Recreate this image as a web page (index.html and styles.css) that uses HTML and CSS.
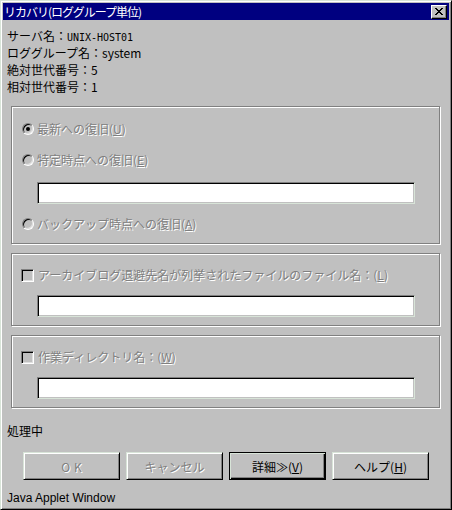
FILE: index.html
```html
<!DOCTYPE html>
<html lang="ja">
<head>
<meta charset="utf-8">
<title>リカバリ(ロググループ単位)</title>
<link rel="stylesheet" href="styles.css">
</head>
<body>
<div class="window">
  <div class="titlebar">
    <span class="title-text">リカバリ(ロググループ単位)</span>
    <span class="close-btn">
      <svg width="8" height="7" viewBox="0 0 8 7"><path d="M0 0h2v1h1v1h2V1h1V0h2v1H7v1H6v1H5v1h1v1h1v1h1v1H6V6H5V5H3v1H2v1H0V6h1V5h1V4h1V3H2V2H1V1H0z" fill="#000"/></svg>
    </span>
  </div>

  <div class="info">
    <div class="line">サーバ名：<span class="mono">UNIX-HOST01</span></div>
    <div class="line">ロググループ名：system</div>
    <div class="line">絶対世代番号：5</div>
    <div class="line">相対世代番号：1</div>
  </div>

  <div class="group group-recover">
    <div class="row"><span class="radio checked"></span><span class="label disabled">最新への復旧(<u>U</u>)</span></div>
    <div class="row row-gap"><span class="radio"></span><span class="label disabled">特定時点への復旧(<u>E</u>)</span></div>
    <div class="field field-a"></div>
    <div class="row row-gap2"><span class="radio"></span><span class="label disabled">バックアップ時点への復旧(<u>A</u>)</span></div>
  </div>

  <div class="group group-small">
    <div class="row"><span class="check"></span><span class="label disabled">アーカイブログ退避先名が列挙されたファイルのファイル名：(<u>L</u>)</span></div>
    <div class="field"></div>
  </div>

  <div class="group group-small">
    <div class="row"><span class="check"></span><span class="label disabled">作業ディレクトリ名：(<u>W</u>)</span></div>
    <div class="field"></div>
  </div>

  <div class="status">処理中</div>

  <div class="buttons">
    <div class="btn"><span class="disabled ok">OK</span></div>
    <div class="btn"><span class="disabled">キャンセル</span></div>
    <div class="btn btn-default"><span>詳細≫(<u>V</u>)</span></div>
    <div class="btn"><span>ヘルプ(<u>H</u>)</span></div>
  </div>

  <div class="footer">Java Applet Window</div>
</div>
</body>
</html>
```

FILE: styles.css
```css
* { box-sizing: border-box; }
html, body { margin: 0; padding: 0; background: #c0c0c0; }
body {
  font-family: "Noto Sans CJK JP", "Liberation Sans", sans-serif;
  font-size: 12px;
  color: #000;
}
.window {
  width: 452px;
  height: 510px;
  background: #c0c0c0;
  border: 1px solid;
  border-color: #d8e4d8 #000 #000 #d8e4d8;
  box-shadow: inset 1px 1px 0 #fff, inset -1px -1px 0 #808080;
  padding: 2px;
  overflow: hidden;
}
.titlebar {
  height: 17px;
  background: #000080;
  display: flex;
  align-items: center;
  justify-content: space-between;
  padding: 0 2px 0 1px;
}
.title-text {
  color: #fff;
  font-size: 12px;
  line-height: 17px;
  letter-spacing: -1px;
}
.close-btn {
  width: 16px;
  height: 14px;
  background: #c0c0c0;
  border: 1px solid;
  border-color: #fff #000 #000 #fff;
  box-shadow: inset -1px -1px 0 #808080;
  display: flex;
  align-items: center;
  justify-content: center;
  padding-bottom: 1px;
}
.close-btn svg { display: block; }
.info { padding: 7px 0 0 4px; }
.line { line-height: 17px; height: 17px; white-space: nowrap; }
.mono {
  font-family: "DejaVu Sans Mono", "Liberation Mono", monospace;
  font-size: 10px;
}

.group {
  margin-left: 8px;
  width: 429px;
  border: 1px solid #808080;
  box-shadow: inset 1px 1px 0 #fff, 1px 1px 0 #fff;
  padding-left: 10px;
}
.group-recover {
  margin-top: 11px;
  padding-top: 12px;
  padding-bottom: 9px;
}
.group-small {
  margin-top: 9px;
  padding-top: 11px;
  padding-bottom: 8px;
}
.row {
  height: 20px;
  display: flex;
  align-items: center;
  white-space: nowrap;
}
.row-gap { margin-top: 11px; }
.row-gap2 { margin-top: 10px; }
.label { line-height: 20px; }
.disabled {
  color: #808080;
  text-shadow: 1px 1px 0 #fff;
}
u { text-decoration: underline; text-underline-offset: 1px; }

.radio {
  width: 12px;
  height: 12px;
  border-radius: 50%;
  border: 1px solid;
  border-color: #808080 #fff #fff #808080;
  box-shadow: inset 1px 1px 0 #000, inset -1px -1px 0 #dfdfdf;
  background: #c0c0c0;
  margin-right: 3px;
  position: relative;
  flex: none;
}
.radio.checked::after {
  content: "";
  position: absolute;
  left: 3px;
  top: 3px;
  width: 4px;
  height: 4px;
  border-radius: 50%;
  background: #000;
}
.check {
  width: 13px;
  height: 13px;
  border: 1px solid;
  border-color: #808080 #fff #fff #808080;
  box-shadow: inset 1px 1px 0 #000, inset -1px -1px 0 #dfdfdf;
  background: #c0c0c0;
  margin-left: -1px;
  margin-right: 4px;
  flex: none;
}

.field {
  margin-left: 15px;
  margin-top: 10px;
  width: 378px;
  height: 22px;
  background: #fff;
  border: 1px solid;
  border-color: #808080 #d8e4d8 #d8e4d8 #808080;
  box-shadow: inset 1px 1px 0 #000, inset -1px -1px 0 #c0c0c0;
}
.field-a { margin-top: 12px; }

.status {
  margin-top: 14px;
  padding-left: 4px;
  line-height: 17px;
  height: 17px;
}
.buttons {
  margin-top: 13px;
  padding-left: 20px;
  display: flex;
  gap: 6px;
}
.btn {
  width: 97px;
  height: 28px;
  border: 1px solid;
  border-color: #d8e4d8 #000 #000 #d8e4d8;
  box-shadow: inset 1px 1px 0 #fff, inset -1px -1px 0 #808080;
  display: flex;
  align-items: center;
  justify-content: center;
  white-space: nowrap;
}
.btn-default {
  border: 1px solid #000;
  box-shadow: inset 1px 1px 0 #d8e4d8, inset -1px -1px 0 #000, inset -2px -2px 0 #808080;
}
.ok { letter-spacing: 4px; margin-right: -4px; }
.footer {
  margin-top: 10px;
  padding-left: 4px;
  line-height: 17px;
  font-family: "Liberation Sans", sans-serif;
  font-size: 12px;
}
```
